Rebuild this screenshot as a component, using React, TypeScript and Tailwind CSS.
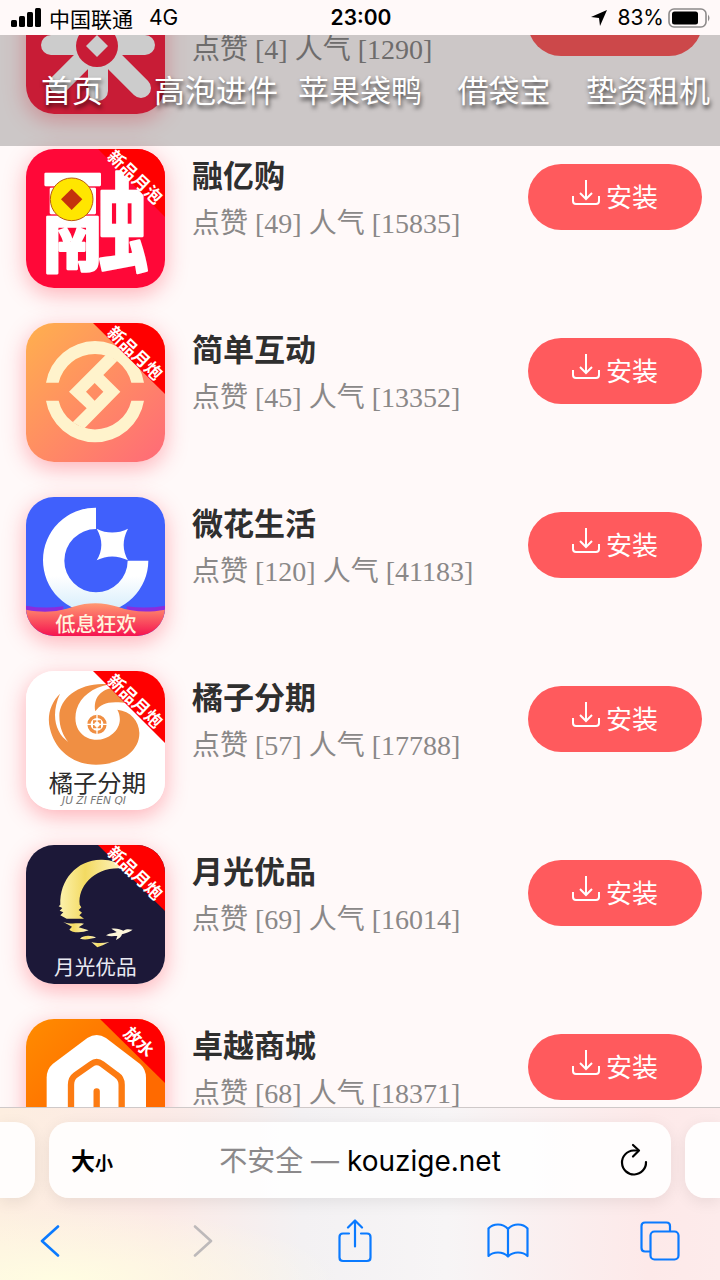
import type { ReactNode } from "react";

interface AppItem {
  id: string;
  name?: string;
  likes: number;
  views: number;
  art: ReactNode;
  badge?: { label: string; start: number; end: number; x: number; y: number };
}

const cjk = "font-['Noto_Sans_CJK_SC',sans-serif]";

const navItems = ["首页", "高泡进件", "苹果袋鸭", "借袋宝", "垫资租机"];

function FlowerArt() {
  return (
    <svg viewBox="0 0 139 139" className="h-full w-full bg-[#fb2444]">
      <g stroke="#fff" strokeWidth="20" strokeLinecap="round">
        <path d="M25 70H119M72 20V116M72 70L33 109M72 70L115 113M72 70L38 36M72 70L106 36" />
      </g>
      <circle cx="71" cy="71" r="21" fill="#fb2444" />
      <path d="M71 60L82 71L71 82L60 71Z" fill="#fff" />
    </svg>
  );
}

function RongArt() {
  return (
    <svg viewBox="48 27 417 417" className="h-full w-full bg-[#ff0838]">
      <text
        x="257"
        y="370"
        fontSize="326"
        fontWeight="700"
        textAnchor="middle"
        fill="#fff"
        stroke="#fff"
        strokeWidth="7"
        strokeLinejoin="round"
        className={cjk}
      >
        融
      </text>
      <circle cx="185" cy="178" r="64" fill="#ffe600" stroke="#b85a10" strokeWidth="3" />
      <path d="M185 146L217 178L185 210L153 178Z" fill="#c4320c" />
    </svg>
  );
}

function CoinArt() {
  return (
    <svg viewBox="48 37 417 417" className="h-full w-full">
      <defs>
        <linearGradient id="coin-bg" x1="0" y1="0" x2="1" y2="1">
          <stop offset="0" stopColor="#ffb04e" />
          <stop offset="1" stopColor="#ff6a78" />
        </linearGradient>
      </defs>
      <rect x="48" y="37" width="417" height="417" fill="url(#coin-bg)" />
      <g fill="#fff3cc">
        <path d="M108 216A149 149 0 0 1 402 216H364A112 112 0 0 0 146 216Z" />
        <path d="M108 270A149 149 0 0 0 402 270H364A112 112 0 0 1 146 270Z" />
        <path
          fillRule="evenodd"
          d="M177 243L290 130L322 150L280 193L331 243L222 354L188 335L230 293ZM254 217L228 243L254 270L280 243Z"
        />
      </g>
    </svg>
  );
}

function StarArt() {
  return (
    <svg viewBox="48 34 417 417" className="h-full w-full bg-[#4060fc]">
      <defs>
        <linearGradient id="ring" x1="0" y1="0" x2="0" y2="1">
          <stop offset="0.65" stopColor="#fff" />
          <stop offset="1" stopColor="#d3ecfb" />
        </linearGradient>
        <linearGradient id="wave" x1="0" y1="0" x2="0" y2="1">
          <stop offset="0" stopColor="#ff9a72" />
          <stop offset="1" stopColor="#f5124f" />
        </linearGradient>
      </defs>
      <path d="M258 66A158 158 0 1 0 415 225H353A95 95 0 1 1 258 130Z" fill="url(#ring)" />
      <path
        d="M260 129Q306 152 354 129Q328 178 354 224Q306 201 260 224Q288 178 260 129Z"
        fill="#fff"
      />
      <path d="M48 360Q100 370 160 362V400H48ZM465 360Q410 370 350 362V400H465Z" fill="#8b2cdc" />
      <path
        d="M48 372C110 384 150 376 190 363C235 349 280 349 325 364C365 378 410 382 465 372V452H48Z"
        fill="url(#wave)"
      />
      <text
        x="258"
        y="439"
        fontSize="61"
        fontWeight="500"
        textAnchor="middle"
        fill="#fff4dc"
        className={cjk}
      >
        低息狂欢
      </text>
    </svg>
  );
}

function OrangeArt() {
  return (
    <svg viewBox="48 30 417 417" className="h-full w-full bg-white">
      <g fill="#f08f43">
        <path d="M300 70C215 60 148 108 148 165C148 200 160 225 175 243C135 215 122 160 150 98C122 125 110 165 120 203C135 268 190 311 258 311C335 311 390 268 388 215C387 180 362 150 322 146C336 172 330 200 308 218C285 238 255 241 232 230C200 215 190 180 200 145C212 108 245 80 300 70Z" />
        <path d="M256 151C248 110 275 82 315 80L360 128C300 118 275 125 256 151Z" />
      </g>
      <circle cx="261" cy="190" r="24" fill="none" stroke="#f08f43" strokeWidth="10" />
      <path d="M249 178H273V202H249Z" fill="#f08f43" />
      <path d="M261 160V220M231 190H291" stroke="#fff" strokeWidth="4" />
      <circle cx="261" cy="190" r="8" fill="#fff" />
      <text
        x="262"
        y="392"
        fontSize="73"
        textAnchor="middle"
        fill="#2b2b2b"
        className={cjk}
      >
        橘子分期
      </text>
      <text
        x="252"
        y="429"
        fontSize="32"
        fontStyle="italic"
        textAnchor="middle"
        fill="#777"
        className="font-['DejaVu_Sans',sans-serif]"
      >
        JU ZI FEN QI
      </text>
    </svg>
  );
}

function MoonArt() {
  return (
    <svg viewBox="48 27 417 417" className="h-full w-full bg-[#1c1838]">
      <defs>
        <linearGradient id="moon" x1="0" y1="0" x2="1" y2="0">
          <stop offset="0" stopColor="#fdf3b0" />
          <stop offset="0.4" stopColor="#f3da62" />
          <stop offset="1" stopColor="#fff6c8" />
        </linearGradient>
      </defs>
      <g fill="url(#moon)">
        <path d="M345 98C325 78 300 70 272 71C200 72 148 132 151 206L146 211L157 216L149 224L160 229L151 238L170 248H222L208 238L216 230L206 222L214 214L209 206C203 150 255 88 345 98Z" />
        <path d="M160 258C180 266 200 260 222 263L206 274L236 283C215 292 185 290 178 281L186 272Z" />
        <path d="M210 308C222 296 245 298 258 305C240 306 232 314 210 308Z" />
        <path d="M244 318C258 322 280 322 298 318L278 328L262 334Z" />
      </g>
      <path
        d="M288 298C302 290 312 292 320 288L304 278C320 276 332 280 340 284C350 278 358 280 368 281C360 288 346 292 336 295C334 302 328 308 318 312L322 300C310 300 300 302 288 298Z"
        fill="#fdf6da"
      />
      <text
        x="256"
        y="418"
        fontSize="62"
        textAnchor="middle"
        fill="#e9e9f2"
        className={cjk}
      >
        月光优品
      </text>
    </svg>
  );
}

function HouseArt() {
  return (
    <svg viewBox="48 39 417 417" className="h-full w-full">
      <defs>
        <linearGradient id="house-bg" x1="0" y1="0" x2="1" y2="1">
          <stop offset="0" stopColor="#ff8c00" />
          <stop offset="0.6" stopColor="#ff6a00" />
        </linearGradient>
      </defs>
      <rect x="48" y="39" width="417" height="417" fill="url(#house-bg)" />
      <path
        d="M110 400V215Q110 190 128 174L232 96Q260 78 288 96L390 174Q408 190 408 215V400Z"
        fill="#fff"
      />
      <path
        d="M183 400V236Q183 217 197 207L244 174Q260 162 276 174L320 207Q335 217 335 236V400M260 400V256"
        fill="none"
        stroke="#fc7b12"
        strokeWidth="19"
        strokeLinecap="round"
      />
    </svg>
  );
}

const apps: AppItem[] = [
  { id: "flower", likes: 4, views: 1290, art: <FlowerArt /> },
  {
    id: "rong",
    name: "融亿购",
    likes: 49,
    views: 15835,
    art: <RongArt />,
    badge: { label: "新品月泡", start: 72, end: 68, x: 109, y: 28 },
  },
  {
    id: "coin",
    name: "简单互动",
    likes: 45,
    views: 13352,
    art: <CoinArt />,
    badge: { label: "新品月炮", start: 67, end: 71, x: 109, y: 30 },
  },
  { id: "star", name: "微花生活", likes: 120, views: 41183, art: <StarArt /> },
  {
    id: "orange",
    name: "橘子分期",
    likes: 57,
    views: 17788,
    art: <OrangeArt />,
    badge: { label: "新品月炮", start: 67, end: 72, x: 109, y: 30 },
  },
  {
    id: "moon",
    name: "月光优品",
    likes: 69,
    views: 16014,
    art: <MoonArt />,
    badge: { label: "新品月炮", start: 72, end: 66, x: 109, y: 28 },
  },
  {
    id: "house",
    name: "卓越商城",
    likes: 68,
    views: 18371,
    art: <HouseArt />,
    badge: { label: "放水", start: 74, end: 64, x: 113, y: 23 },
  },
];

function StatusBar() {
  return (
    <header className="grid h-[35px] shrink-0 grid-cols-3 items-center pl-[11px] pr-[9px] text-black">
      <div className={`flex items-center text-[21px] leading-[30px] ${cjk}`}>
        <svg viewBox="0 0 30 19" className="mr-2 h-[19px] w-[30px]">
          <rect x="0" y="12" width="6" height="7" rx="1.5" />
          <rect x="8" y="8" width="6" height="11" rx="1.5" />
          <rect x="16" y="4" width="6" height="15" rx="1.5" />
          <rect x="24" y="0" width="6" height="19" rx="1.5" />
        </svg>
        <span>中国联通</span>
        <span className="ml-4 font-['Inter',sans-serif]">4G</span>
      </div>
      <time className="text-center font-['Inter',sans-serif] text-[21px] font-semibold leading-[30px]">
        23:00
      </time>
      <div className="flex items-center justify-end font-['Inter',sans-serif] text-[21px] leading-[30px]">
        <svg viewBox="0 0 16 16" className="mr-2.5 h-4 w-4">
          <path d="M16 0L9 16L8 8L0 7Z" />
        </svg>
        <span>83%</span>
        <svg viewBox="0 0 43 20" className="ml-1 h-5 w-[43px]">
          <rect x="1" y="1" width="37" height="18" rx="5" fill="none" stroke="#8d8a8a" strokeWidth="1.6" />
          <rect x="4" y="3.5" width="26" height="13" rx="2.5" />
          <path d="M40 6.5Q43 10 40 13.5Z" fill="#8d8a8a" />
        </svg>
      </div>
    </header>
  );
}

function Badge({ badge }: { badge: NonNullable<AppItem["badge"]> }) {
  return (
    <svg viewBox="0 0 139 139" className="absolute inset-0 h-full w-full">
      <polygon points={`${badge.start},0 139,0 139,${badge.end}`} fill="#f00" />
      <text
        x={badge.x}
        y={badge.y + 6}
        fontSize="17"
        fontWeight="700"
        textAnchor="middle"
        fill="#fff"
        transform={`rotate(44 ${badge.x} ${badge.y})`}
        className={cjk}
      >
        {badge.label}
      </text>
    </svg>
  );
}

function AppRow({ app }: { app: AppItem }) {
  return (
    <li className="flex items-start pb-[35px] pl-[26px] pr-[18px]">
      <div className="relative h-[139px] w-[139px] shrink-0 overflow-hidden rounded-[28px] shadow-[0_6px_22px_rgba(255,40,60,0.35)]">
        {app.art}
        {app.badge && <Badge badge={app.badge} />}
      </div>
      <div className="ml-[27px] min-w-0 flex-1 pt-[5px]">
        <h3 className={`min-h-10 text-[31px] font-bold leading-[40px] text-[#2f2f2f] ${cjk}`}>
          {app.name}
        </h3>
        <p className="mt-[10px] whitespace-nowrap font-['Liberation_Serif','Noto_Sans_CJK_SC',serif] text-[28px] leading-[40px] text-[#8a8888]">
          点赞 [{app.likes}] 人气 [{app.views}]
        </p>
      </div>
      <button
        type="button"
        aria-label="安装"
        className={`mt-[15px] flex h-[66px] w-[174px] shrink-0 items-center justify-center gap-1.5 rounded-full bg-[#ff5a5d] pb-0.5 text-[26px] leading-[36px] text-white ${cjk}`}
      >
        {app.name && (
          <>
            <svg viewBox="0 0 28 34" className="h-[34px] w-7" fill="none" stroke="#fff" strokeWidth="2">
              <path d="M14 1V20M8 14L14 20L20 14" />
              <path d="M1 17V22Q1 25 4 25H24Q27 25 27 22V17" />
            </svg>
            安装
          </>
        )}
      </button>
    </li>
  );
}

function BrowserBar() {
  const tab = "h-[76px] bg-white/90 shadow-[0_4px_16px_rgba(0,0,0,0.08)]";
  const tool = "flex h-11 w-11 items-center justify-center text-[#0a7aff]";

  return (
    <footer className="relative z-20 h-[173px] shrink-0 border-t border-[#cfc9c9] bg-[radial-gradient(ellipse_at_8%_100%,#fffde2_0%,transparent_30%),linear-gradient(90deg,#fdeee0_0%,#fceae6_22%,#f3f1f3_42%,#f7f5f6_62%,#fde9e9_90%,#fdebeb_100%)]">
      <div className="flex gap-[14px] pt-[14px]">
        <div className={`w-[35px] rounded-r-[20px] ${tab}`} />
        <div className={`flex flex-1 items-center justify-between rounded-[20px] px-[22px] ${tab}`}>
          <button type="button" className={`w-[60px] text-left font-bold text-black ${cjk}`}>
            <span className="text-[24px]">大</span>
            <span className="text-[18px]">小</span>
          </button>
          <button
            type="button"
            className="pt-0.5 font-['Inter','Noto_Sans_CJK_SC',sans-serif] text-[28px] leading-[40px] text-black"
          >
            <span className="text-[#8b898b]">不安全 — </span>
            kouzige.net
          </button>
          <button type="button" aria-label="刷新" className="flex w-[60px] justify-end">
            <svg viewBox="0 0 32 34" className="h-[34px] w-8" fill="none" stroke="#000" strokeWidth="2.2" strokeLinecap="round" strokeLinejoin="round">
              <path d="M20 7.500H16.500A12 12 0 1 0 29 19" />
              <path d="M16 2L22 7.500L16 13.500" />
            </svg>
          </button>
        </div>
        <div className={`w-[35px] rounded-l-[20px] ${tab}`} />
      </div>
      <nav className="flex justify-between pl-7 pr-[38px] pt-[21px]">
        <button type="button" aria-label="后退" className={tool}>
          <svg viewBox="0 0 20 32" className="h-8 w-5" fill="none" stroke="currentColor" strokeWidth="2.6" strokeLinecap="round" strokeLinejoin="round">
            <path d="M18 1.500L2 16L18 30.500" />
          </svg>
        </button>
        <button type="button" aria-label="前进" className="flex h-11 w-11 items-center justify-center text-[#bdb9ba]">
          <svg viewBox="0 0 20 32" className="h-8 w-5" fill="none" stroke="currentColor" strokeWidth="2.6" strokeLinecap="round" strokeLinejoin="round">
            <path d="M2 1.500L18 16L2 30.500" />
          </svg>
        </button>
        <button type="button" aria-label="分享" className={tool}>
          <svg viewBox="0 0 34 44" className="h-11 w-[34px]" fill="none" stroke="currentColor" strokeWidth="2.2" strokeLinecap="round" strokeLinejoin="round">
            <path d="M11 14.500H5Q1.500 14.500 1.500 18V38.500Q1.500 42 5 42H29Q32.500 42 32.500 38.500V18Q32.500 14.500 29 14.500H23" />
            <path d="M17 27.500V2M10 8.500L17 1.500L24 8.500" />
          </svg>
        </button>
        <button type="button" aria-label="书签" className={tool}>
          <svg viewBox="0 0 42 36" className="h-9 w-[42px]" fill="none" stroke="currentColor" strokeWidth="2.2" strokeLinejoin="round">
            <path d="M21 6Q17 1.500 11 1.500Q5 1.500 1.500 5.500V33Q5 29.500 11 29.500Q17 29.500 21 33.500Q25 29.500 31 29.500Q37 29.500 40.500 33V5.500Q37 1.500 31 1.500Q25 1.500 21 6ZM21 6V33" />
          </svg>
        </button>
        <button type="button" aria-label="标签页" className={tool}>
          <svg viewBox="0 0 40 40" className="h-10 w-10" fill="none" stroke="currentColor" strokeWidth="2.2">
            <path d="M10 30.500H5Q1.500 30.500 1.500 27V5Q1.500 1.500 5 1.500H26.500Q30 1.500 30 5V10" />
            <rect x="10.500" y="10.500" width="28" height="28" rx="4" />
          </svg>
        </button>
      </nav>
    </footer>
  );
}

export default function App() {
  return (
    <div className="flex h-screen flex-col overflow-hidden bg-[#fff9f9]">
      <StatusBar />
      <main className="relative min-h-0 flex-1 overflow-hidden">
        <nav className="absolute inset-x-0 top-0 z-10 grid h-[111px] grid-cols-5 items-center bg-black/20 pb-1">
          {navItems.map((item) => (
            <a
              key={item}
              href="#"
              className={`whitespace-nowrap text-center text-[31px] leading-[40px] text-white [text-shadow:1px_3px_4px_rgba(0,0,0,0.7)] ${cjk}`}
            >
              {item}
            </a>
          ))}
        </nav>
        {/* list is scrolled part of the way under the menu */}
        <ul className="-mt-[60px]">
          {apps.map((app) => (
            <AppRow key={app.id} app={app} />
          ))}
        </ul>
      </main>
      <BrowserBar />
    </div>
  );
}
